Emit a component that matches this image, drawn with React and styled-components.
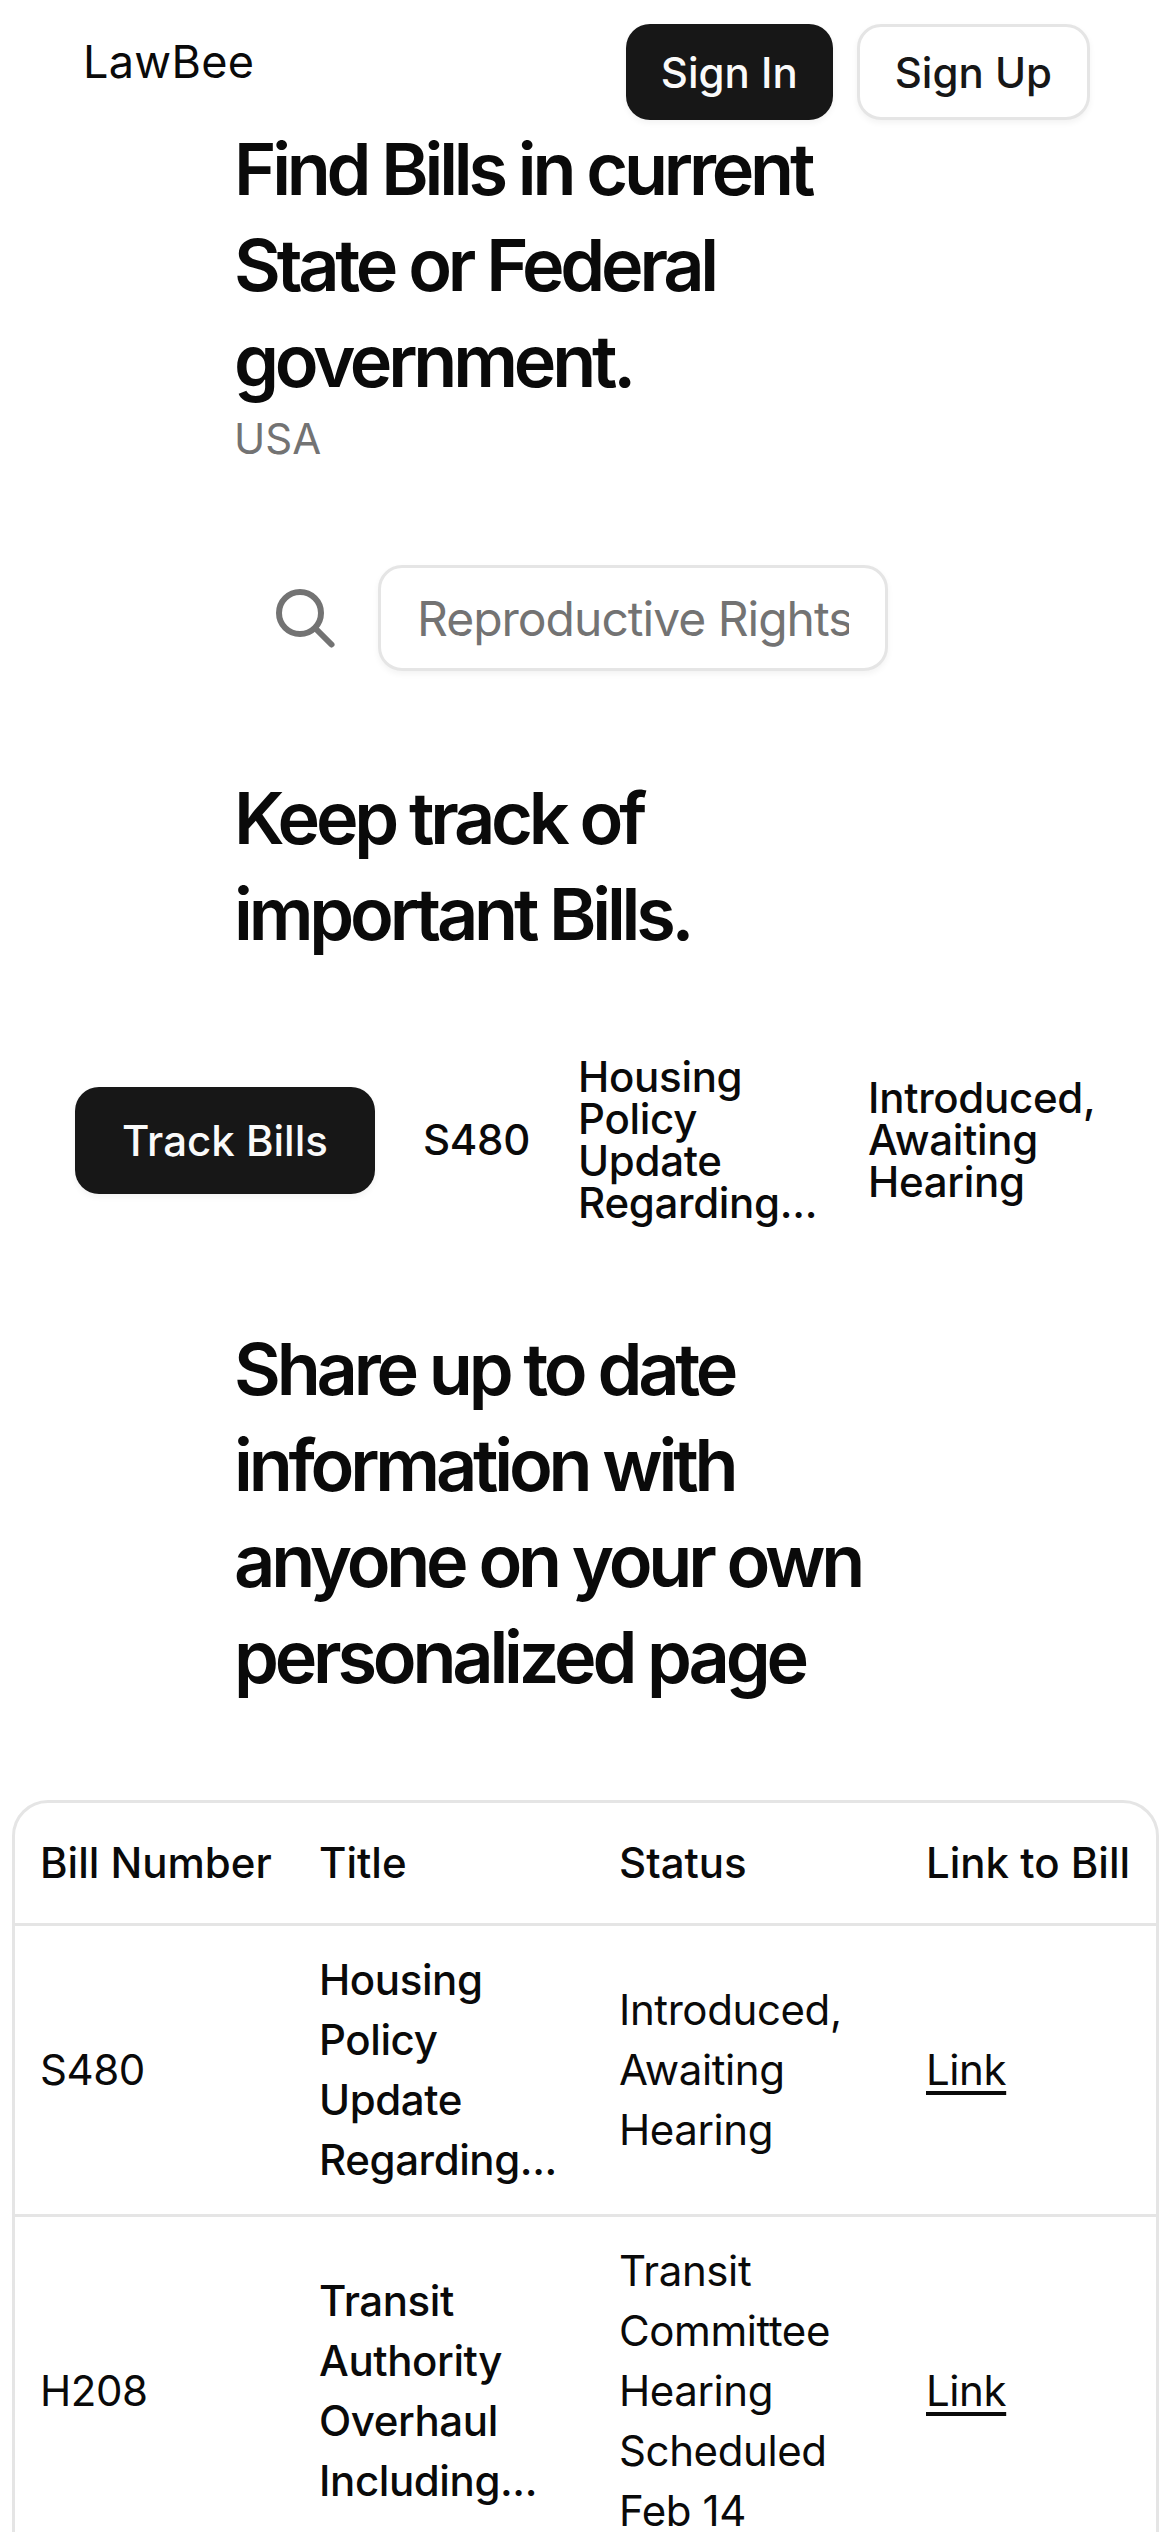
import React from "react";
import styled, { createGlobalStyle } from "styled-components";

const GlobalStyle = createGlobalStyle`
  * {
    box-sizing: border-box;
  }
  html, body {
    margin: 0;
    padding: 0;
    background: #ffffff;
  }
  body {
    font-family: Inter, "Noto Sans", sans-serif;
    color: #0a0a0a;
  }
`;

const bills = [
  {
    number: "S480",
    title: "Housing Policy Update Regarding...",
    status: "Introduced, Awaiting Hearing",
  },
  {
    number: "H208",
    title: "Transit Authority Overhaul Including...",
    status: "Transit Committee Hearing Scheduled Feb 14",
  },
];

const SearchIcon = () => (
  <svg width="72" height="72" viewBox="0 0 72 72" fill="none" stroke="#737373" strokeWidth="6" strokeLinecap="round">
    <circle cx="30" cy="31" r="21" />
    <line x1="46" y1="47" x2="61.5" y2="62.5" />
  </svg>
);

const App = () => (
  <Page>
    <GlobalStyle />
    <Nav>
      <Logo>LawBee</Logo>
      <NavActions>
        <NavButton $primary>Sign In</NavButton>
        <NavButton>Sign Up</NavButton>
      </NavActions>
    </Nav>
    <Section $top={1}>
      <Heading>Find Bills in current State or Federal government.</Heading>
      <Muted>USA</Muted>
    </Section>
    <SearchRow>
      <SearchIcon />
      <SearchInput placeholder="Reproductive Rights" readOnly />
    </SearchRow>
    <Section $top={99}>
      <Heading>Keep track of important Bills.</Heading>
    </Section>
    <TrackRow>
      <TrackButton>Track Bills</TrackButton>
      <TrackCell>S480</TrackCell>
      <TrackCell $width={242}>Housing Policy Update Regarding...</TrackCell>
      <TrackCell $width={228}>Introduced, Awaiting Hearing</TrackCell>
    </TrackRow>
    <Section $top={97}>
      <Heading>Share up to date information with anyone on your own personalized page</Heading>
    </Section>
    <TableCard>
      <BillTable>
        <colgroup>
          <col style={{ width: 279 }} />
          <col style={{ width: 300 }} />
          <col style={{ width: 307 }} />
          <col style={{ width: 255 }} />
        </colgroup>
        <thead>
          <tr>
            <HeadCell>Bill Number</HeadCell>
            <HeadCell>Title</HeadCell>
            <HeadCell>Status</HeadCell>
            <HeadCell>Link to Bill</HeadCell>
          </tr>
        </thead>
        <tbody>
          {bills.map((bill) => (
            <tr key={bill.number}>
              <BodyCell>{bill.number}</BodyCell>
              <BodyCell $title>{bill.title}</BodyCell>
              <BodyCell>{bill.status}</BodyCell>
              <BodyCell>
                <BillLink href="#">Link</BillLink>
              </BodyCell>
            </tr>
          ))}
        </tbody>
      </BillTable>
    </TableCard>
  </Page>
);

const Page = styled.div`
  height: 2532px;
  overflow: hidden;
`;

const Nav = styled.header`
  display: flex;
  justify-content: space-between;
  align-items: flex-start;
  padding: 24px 80px 0 83px;
`;

const Logo = styled.div`
  font-size: 45px;
  line-height: 76px;
  letter-spacing: 0.3px;
  color: #0a0a0a;
`;

const NavActions = styled.div`
  display: flex;
  gap: 24px;
`;

const NavButton = styled.button`
  height: 96px;
  padding: 0 35px;
  border-radius: 24px;
  font-family: inherit;
  font-size: 42px;
  font-weight: 500;
  color: ${(p) => (p.$primary ? "#fafafa" : "#171717")};
  background: ${(p) => (p.$primary ? "#171717" : "#ffffff")};
  border: ${(p) => (p.$primary ? "none" : "3px solid #e5e5e5")};
  box-shadow: 0 3px 6px rgba(0, 0, 0, 0.05);
`;

const Section = styled.section`
  width: 720px;
  margin: ${(p) => p.$top}px 0 0 234px;
`;

const Heading = styled.h2`
  margin: 0;
  font-size: 72px;
  line-height: 96px;
  font-weight: 600;
  letter-spacing: -4.2px;
  color: #0a0a0a;
`;

const Muted = styled.p`
  margin: 0;
  font-size: 42px;
  line-height: 60px;
  color: #737373;
`;

const SearchRow = styled.div`
  display: flex;
  align-items: center;
  gap: 36px;
  padding-left: 270px;
  margin-top: 96px;
`;

const SearchInput = styled.input`
  width: 510px;
  height: 106px;
  padding: 0 36px;
  border: 3px solid #e5e5e5;
  border-radius: 24px;
  font-family: inherit;
  font-size: 48px;
  letter-spacing: -1px;
  color: #0a0a0a;
  background: #ffffff;
  box-shadow: 0 3px 6px rgba(0, 0, 0, 0.05);
  outline: none;
  &::placeholder {
    color: #737373;
    opacity: 1;
  }
`;

const TrackRow = styled.div`
  display: flex;
  align-items: center;
  gap: 48px;
  padding-left: 75px;
  margin-top: 94px;
`;

const TrackButton = styled.button`
  width: 300px;
  height: 107px;
  border: none;
  border-radius: 24px;
  font-family: inherit;
  font-size: 42px;
  font-weight: 500;
  color: #fafafa;
  background: #171717;
  box-shadow: 0 3px 6px rgba(0, 0, 0, 0.05);
`;

const TrackCell = styled.div`
  width: ${(p) => (p.$width ? `${p.$width}px` : "auto")};
  font-size: 42px;
  line-height: 42px;
  font-weight: 500;
  letter-spacing: -0.3px;
  color: #0a0a0a;
`;

const TableCard = styled.div`
  margin: 95px 11px 0 12px;
  border: 3px solid #e5e5e5;
  border-radius: 36px;
  overflow: hidden;
`;

const BillTable = styled.table`
  width: 100%;
  table-layout: fixed;
  border-collapse: collapse;
  font-size: 42px;
`;

const HeadCell = styled.th`
  height: 121px;
  padding: 0 24px 0 25px;
  text-align: left;
  font-weight: 500;
  white-space: nowrap;
  color: #0a0a0a;
  border-bottom: 3px solid #e5e5e5;
`;

const BodyCell = styled.td`
  padding: 24px 24px 24px 25px;
  line-height: 60px;
  font-weight: ${(p) => (p.$title ? 500 : 400)};
  letter-spacing: -0.4px;
  vertical-align: middle;
  color: #0a0a0a;
  border-bottom: 3px solid #e5e5e5;
`;

const BillLink = styled.a`
  color: #0a0a0a;
  text-decoration: underline;
  text-underline-offset: 6px;
`;

export default App;
